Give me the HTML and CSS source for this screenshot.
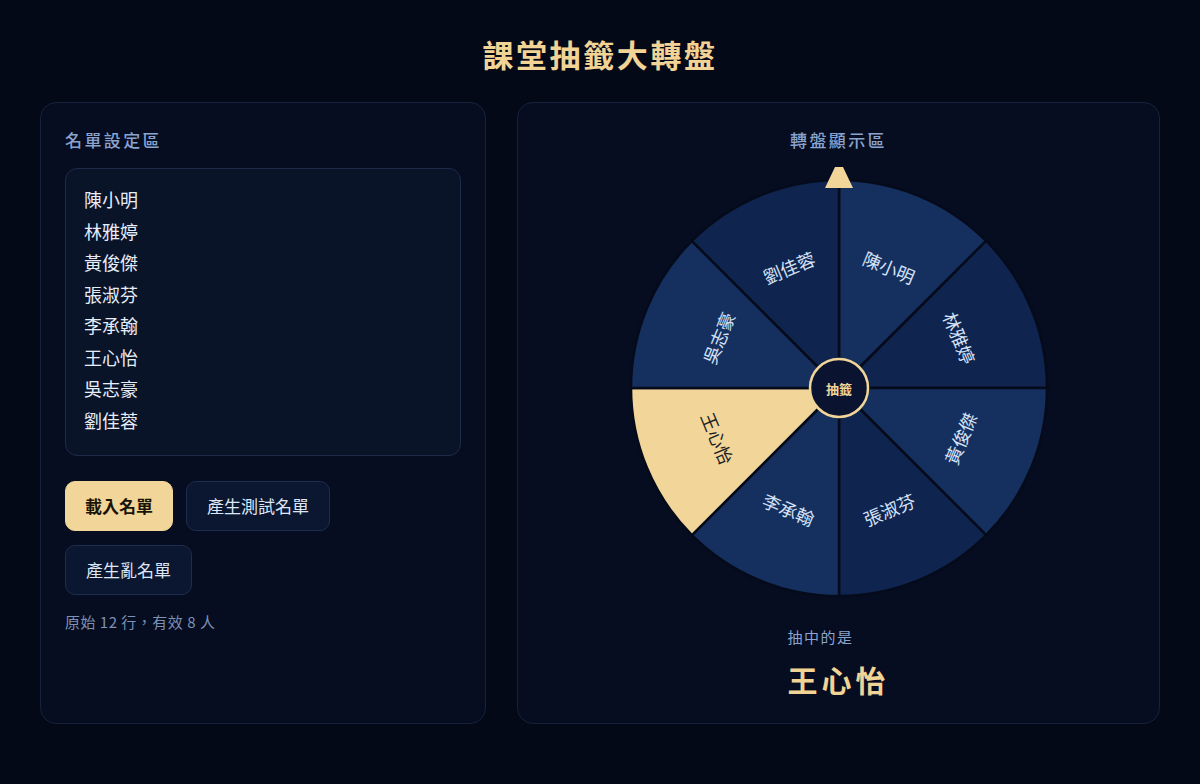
FILE: index.html
```html
<!DOCTYPE html>
<html lang="zh-Hant">
<head>
  <meta charset="UTF-8">
  <meta name="viewport" content="width=device-width, initial-scale=1.0">
  <title>課堂抽籤大轉盤</title>
  <link rel="stylesheet" href="styles.css">
</head>
<body>

  <h1 class="page-title">課堂抽籤大轉盤</h1>

  <main class="layout">
    <!-- 名單設定 -->
    <section class="panel list-panel">
      <h2 class="panel-title">名單設定區</h2>
      <textarea class="name-input" spellcheck="false">陳小明
林雅婷
黃俊傑
張淑芬
李承翰
王心怡
吳志豪
劉佳蓉</textarea>
      <div class="button-row">
        <button class="btn btn-primary">載入名單</button>
        <button class="btn">產生測試名單</button>
        <button class="btn">產生亂名單</button>
      </div>
      <p class="status">原始 12 行，有效 8 人</p>
    </section>

    <!-- 轉盤 -->
    <section class="panel wheel-panel">
      <h2 class="panel-title">轉盤顯示區</h2>
      <svg class="wheel" width="430" height="440" viewBox="-215 -222 430 440">
        <g class="slices">
          <path class="slice-a" d="M0 0 L0 -208 A208 208 0 0 1 147.08 -147.08 Z"/>
          <path class="slice-b" d="M0 0 L147.08 -147.08 A208 208 0 0 1 208 0 Z"/>
          <path class="slice-a" d="M0 0 L208 0 A208 208 0 0 1 147.08 147.08 Z"/>
          <path class="slice-b" d="M0 0 L147.08 147.08 A208 208 0 0 1 0 208 Z"/>
          <path class="slice-a" d="M0 0 L0 208 A208 208 0 0 1 -147.08 147.08 Z"/>
          <path class="slice-hit" d="M0 0 L-147.08 147.08 A208 208 0 0 1 -208 0 Z"/>
          <path class="slice-a" d="M0 0 L-208 0 A208 208 0 0 1 -147.08 -147.08 Z"/>
          <path class="slice-b" d="M0 0 L-147.08 -147.08 A208 208 0 0 1 0 -208 Z"/>
        </g>
        <g class="labels">
          <text transform="rotate(22.5) translate(0 -131)">陳小明</text>
          <text transform="rotate(67.5) translate(0 -131)">林雅婷</text>
          <text transform="rotate(112.5) translate(0 -131) rotate(180)">黃俊傑</text>
          <text transform="rotate(157.5) translate(0 -131) rotate(180)">張淑芬</text>
          <text transform="rotate(202.5) translate(0 -131) rotate(180)">李承翰</text>
          <text class="label-hit" transform="rotate(247.5) translate(0 -131) rotate(180)">王心怡</text>
          <text transform="rotate(292.5) translate(0 -131)">吳志豪</text>
          <text transform="rotate(337.5) translate(0 -131)">劉佳蓉</text>
        </g>
        <polygon class="pointer" points="-4,-221 4,-221 14,-200 -14,-200"/>
        <circle class="hub" r="29"/>
        <text class="hub-text">抽籤</text>
      </svg>
      <div class="result">
        <p class="result-label">抽中的是</p>
        <p class="result-name">王心怡</p>
      </div>
    </section>
  </main>

</body>
</html>
```

FILE: styles.css
```css
/* 頁面基本設定 */
body {
  margin: 0;
  padding: 34px 40px;
  background-color: #040917;
  font-family: "Noto Sans CJK TC", "Noto Sans", sans-serif;
  color: #d4e2fa;
}

.page-title {
  margin: 0 0 28px;
  text-align: center;
  font-size: 31px;
  line-height: 40px;
  font-weight: 700;
  letter-spacing: 2.6px;
  color: #f1d396;
}

/* 兩欄版面 */
.layout {
  display: grid;
  grid-template-columns: 446px 1fr;
  gap: 31px;
}

.panel {
  background-color: #060d20;
  border: 1px solid #16213b;
  border-radius: 16px;
  padding: 24px;
  display: flex;
  flex-direction: column;
}

.panel-title {
  margin: 0;
  font-size: 17px;
  line-height: 26px;
  font-weight: 500;
  letter-spacing: 2.4px;
  color: #8aa3cf;
}

/* 名單輸入 */
.name-input {
  margin-top: 15px;
  height: 288px;
  box-sizing: border-box;
  padding: 15px 18px;
  background-color: #0a1429;
  border: 1px solid #1d2a48;
  border-radius: 12px;
  font-family: inherit;
  font-size: 18px;
  line-height: 31.5px;
  color: #e6edf9;
  resize: none;
  outline: none;
  overflow: hidden;
}

.button-row {
  margin-top: 25px;
  display: flex;
  flex-wrap: wrap;
  gap: 14px 13px;
}

.btn {
  padding: 12px 20px;
  font-family: inherit;
  font-size: 17px;
  line-height: 24px;
  color: #dde6f5;
  background-color: #0b1630;
  border: 1px solid #1f2c4b;
  border-radius: 10px;
  cursor: pointer;
}

.btn-primary {
  padding: 12px 19px;
  background-color: #f2d598;
  border-color: #f2d598;
  color: #1a1408;
  font-weight: 700;
}

.status {
  margin: 16px 0 0;
  font-size: 15px;
  line-height: 22px;
  letter-spacing: 0.5px;
  color: #7d90b5;
}

/* 轉盤 */
.wheel-panel {
  align-items: center;
}

.wheel {
  display: block;
  margin-top: 13px;
}

.slices path {
  stroke: #050b1a;
  stroke-width: 2.5;
}

.slice-a {
  fill: #15305f;
}

.slice-b {
  fill: #0f2550;
}

.slice-hit {
  fill: #f2d598;
}

.labels text {
  font-family: "Noto Sans CJK TC", sans-serif;
  font-size: 18px;
  fill: #d5e2f8;
  text-anchor: middle;
  dominant-baseline: central;
}

.labels .label-hit {
  fill: #1b1d24;
}

.pointer {
  fill: #f2d598;
}

.hub {
  fill: #0a1430;
  stroke: #f2d598;
  stroke-width: 2.5;
}

.hub-text {
  font-family: "Noto Sans CJK TC", sans-serif;
  font-size: 13px;
  font-weight: 700;
  fill: #f2d598;
  text-anchor: middle;
  dominant-baseline: central;
}

/* 抽中結果 */
.result {
  margin-top: 20px;
}

.result-label {
  margin: 0;
  font-size: 15px;
  line-height: 22px;
  letter-spacing: 1.5px;
  color: #8aa3cf;
}

.result-name {
  margin: 11px 0 0;
  font-size: 30px;
  line-height: 40px;
  font-weight: 700;
  letter-spacing: 4px;
  color: #f1d396;
}
```
